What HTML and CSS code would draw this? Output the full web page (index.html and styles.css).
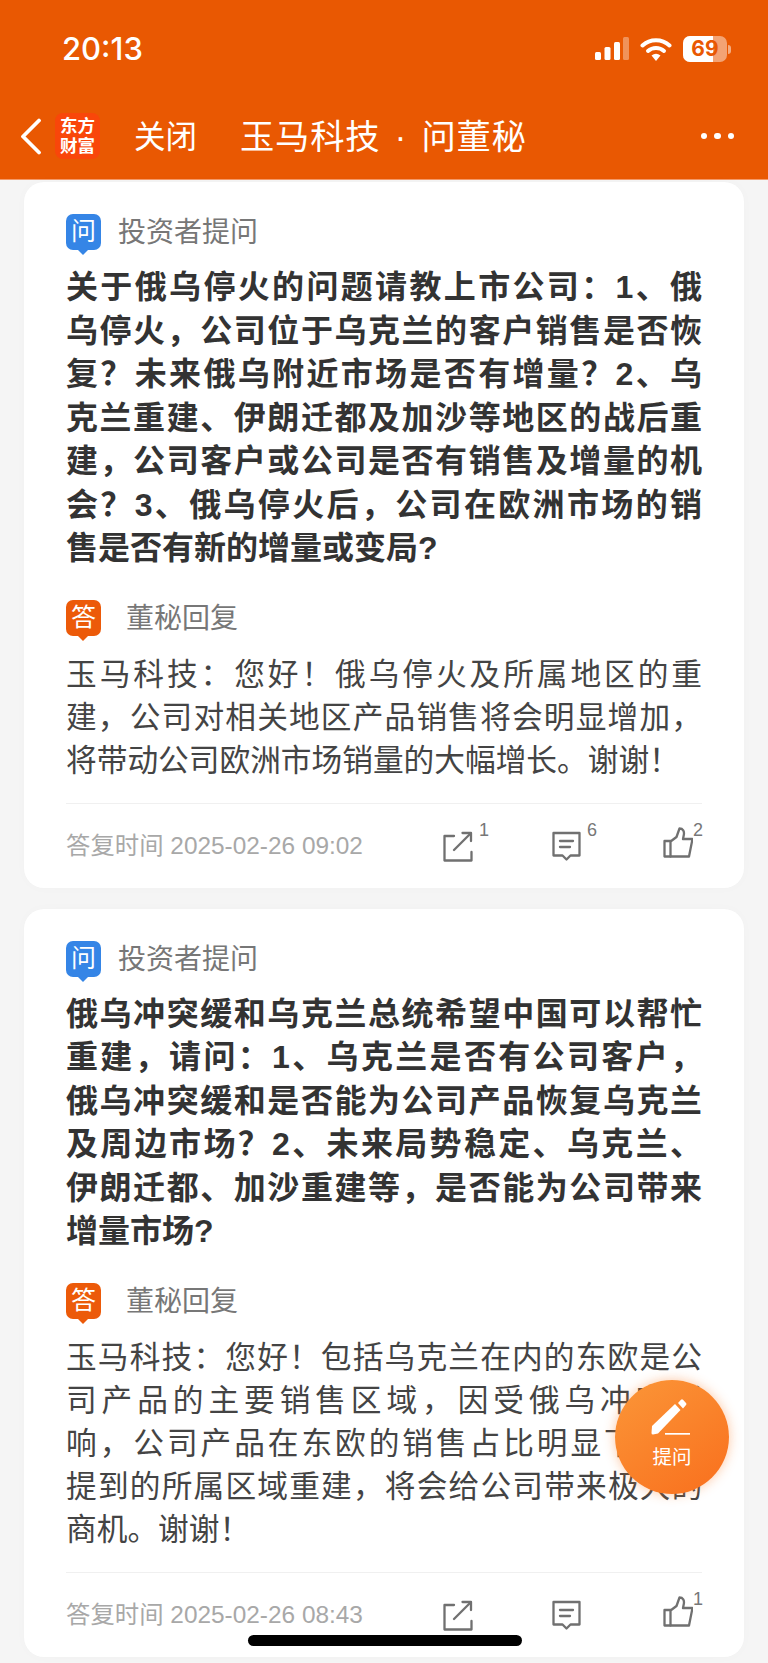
FILE: index.html
```html
<!DOCTYPE html>
<html lang="zh-CN">
  <head>
    <title>玉马科技 · 问董秘</title>
    <link rel="stylesheet" href="styles.css">
  </head>
  <body>
    <div class="phone">
      <header class="topBar">
        <div class="statusBar">
          <span class="clock">20:13</span>
          <div class="statusIcons">
            <svg class="signal" width="34" height="24" viewBox="0 0 34 24">
              <rect x="0" y="15" width="6" height="8" rx="1.500" fill="#fff"/>
              <rect x="9.500" y="10" width="6" height="13" rx="1.500" fill="#fff"/>
              <rect x="19" y="5" width="6" height="18" rx="1.500" fill="#fff"/>
              <rect x="28" y="0" width="6" height="23" rx="1.500" fill="#fff" fill-opacity=".35"/>
            </svg>
            <svg class="wifi" width="32" height="24" viewBox="0 0 32 24">
              <path d="M2.500 8.500C10 1.500 22 1.500 29.500 8.500" fill="none" stroke="#fff" stroke-width="4" stroke-linecap="round"/>
              <path d="M8 14C12.500 10 19.500 10 24 14" fill="none" stroke="#fff" stroke-width="4" stroke-linecap="round"/>
              <path d="M11.500 18.500Q16 15 20.500 18.500L16 24Z" fill="#fff"/>
            </svg>
            <div class="battery">
              <div class="batteryBody"><div class="batteryFill"></div><span class="batteryNum">69</span></div>
              <div class="batteryTip"></div>
            </div>
          </div>
        </div>
        <nav class="navBar">
          <svg class="backIcon" width="22" height="37" viewBox="0 0 22 37">
            <path d="M19 2.500L3 18.500L19 34.500" fill="none" stroke="#fff" stroke-width="3.800" stroke-linecap="round" stroke-linejoin="round"/>
          </svg>
          <div class="logo"><span>东方</span><span>财富</span></div>
          <span class="closeBtn">关闭</span>
          <span class="navTitle">玉马科技<span class="navDot">·</span>问董秘</span>
          <div class="moreDots"><i></i><i></i><i></i></div>
        </nav>
      </header>

      <main class="list">
        <section class="card">
          <div class="rowLabel">
            <div class="badge badgeAsk">问</div>
            <span class="labelText">投资者提问</span>
          </div>
          <p class="question">
            <span class="line">关于俄乌停火的问题请教上市公司：1、俄</span>
            <span class="line">乌停火，公司位于乌克兰的客户销售是否恢</span>
            <span class="line">复？未来俄乌附近市场是否有增量？2、乌</span>
            <span class="line">克兰重建、伊朗迁都及加沙等地区的战后重</span>
            <span class="line">建，公司客户或公司是否有销售及增量的机</span>
            <span class="line">会？3、俄乌停火后，公司在欧洲市场的销</span>
            <span class="line">售是否有新的增量或变局?</span>
          </p>
          <div class="rowLabel rowAnswer">
            <div class="badge badgeAnswer">答</div>
            <span class="labelText labelAnswer">董秘回复</span>
          </div>
          <p class="answer">
            <span class="line">玉马科技：您好！俄乌停火及所属地区的重</span>
            <span class="line">建，公司对相关地区产品销售将会明显增加，</span>
            <span class="line">将带动公司欧洲市场销量的大幅增长。谢谢！</span>
          </p>
          <div class="cardFoot">
            <span class="footTime">答复时间 2025-02-26 09:02</span>
            <div class="footActions">
              <div class="action">
                <svg width="30" height="32" viewBox="0 0 30 32"><use href="#icoShare"/></svg>
                <span class="count">1</span>
              </div>
              <div class="action actionComment">
                <svg width="30" height="32" viewBox="0 0 30 32"><use href="#icoComment"/></svg>
                <span class="count">6</span>
              </div>
              <div class="action actionLike">
                <svg width="30" height="32" viewBox="0 0 30 32"><use href="#icoLike"/></svg>
                <span class="count">2</span>
              </div>
            </div>
          </div>
        </section>

        <section class="card">
          <div class="rowLabel">
            <div class="badge badgeAsk">问</div>
            <span class="labelText">投资者提问</span>
          </div>
          <p class="question">
            <span class="line">俄乌冲突缓和乌克兰总统希望中国可以帮忙</span>
            <span class="line">重建，请问：1、乌克兰是否有公司客户，</span>
            <span class="line">俄乌冲突缓和是否能为公司产品恢复乌克兰</span>
            <span class="line">及周边市场？2、未来局势稳定、乌克兰、</span>
            <span class="line">伊朗迁都、加沙重建等，是否能为公司带来</span>
            <span class="line">增量市场?</span>
          </p>
          <div class="rowLabel rowAnswer">
            <div class="badge badgeAnswer">答</div>
            <span class="labelText labelAnswer">董秘回复</span>
          </div>
          <p class="answer">
            <span class="line">玉马科技：您好！包括乌克兰在内的东欧是公</span>
            <span class="line">司产品的主要销售区域，因受俄乌冲突影</span>
            <span class="line">响，公司产品在东欧的销售占比明显下降。</span>
            <span class="line lineTight">提到的所属区域重建，将会给公司带来极大的</span>
            <span class="line">商机。谢谢！</span>
          </p>
          <div class="cardFoot">
            <span class="footTime">答复时间 2025-02-26 08:43</span>
            <div class="footActions">
              <div class="action">
                <svg width="30" height="32" viewBox="0 0 30 32"><use href="#icoShare"/></svg>
              </div>
              <div class="action actionComment">
                <svg width="30" height="32" viewBox="0 0 30 32"><use href="#icoComment"/></svg>
              </div>
              <div class="action actionLike">
                <svg width="30" height="32" viewBox="0 0 30 32"><use href="#icoLike"/></svg>
                <span class="count">1</span>
              </div>
            </div>
          </div>
        </section>
      </main>

      <button class="askBtn">
        <svg width="44" height="40" viewBox="0 0 44 40">
          <path d="M2 29L25 7L30.500 13L8 36.500L3 37.500Q1.500 37.500 1.500 36Z" fill="#fff"/>
          <path d="M28 6L31 2.800Q32 1.800 33 2.800L36 6Q37 7 36 8L33 11.500Z" fill="#fff"/>
          <rect x="15" y="36" width="25" height="1.700" fill="#fff"/>
        </svg>
        <span>提问</span>
      </button>
      <div class="homeBar"></div>
    </div>

    <svg width="0" height="0" class="iconDefs">
      <defs>
        <g id="icoShare" fill="none" stroke="#707070" stroke-width="2.300" stroke-linecap="round" stroke-linejoin="round">
          <path d="M11 6H1.500V30.500H28.500V22"/>
          <path d="M11 20L27 4"/>
          <path d="M19.500 3H28V11"/>
        </g>
        <g id="icoComment" fill="none" stroke="#707070" stroke-width="2.300" stroke-linecap="round" stroke-linejoin="round">
          <path d="M2.500 3H28.500V25.500H19.500L15.500 29.500L11.500 25.500H2.500Z"/>
          <path d="M9 11H22"/>
          <path d="M9 17H19"/>
        </g>
        <g id="icoLike" fill="none" stroke="#707070" stroke-width="2.300" stroke-linecap="round" stroke-linejoin="round">
          <path d="M7.500 14H1.500V29.500H7.500"/>
          <path d="M7.500 14.500L13.500 10L16.500 1.500C20 1.500 21.500 4.500 20.800 8L20 12H29.500L26 29.500H7.500Z"/>
        </g>
      </defs>
    </svg>
  </body>
</html>
```

FILE: styles.css
```css
* { box-sizing: border-box; }
body { margin: 0; background: #f5f5f5; font-family: "Liberation Sans", "Noto Sans CJK SC", sans-serif; }
.iconDefs { position: absolute; }

.phone { position: relative; width: 768px; height: 1663px; overflow: hidden; background: #f5f5f5; }

.topBar { background: #e95802; color: #fff; height: 180px; border-bottom: 1px solid #f49a6a; }
.statusBar { height: 97px; display: flex; justify-content: space-between; align-items: flex-start; padding: 30px 37px 0 62px; }
.clock { font-family: "Inter", "Liberation Sans", sans-serif; font-size: 31px; font-weight: 500; line-height: 38px; }
.statusIcons { display: flex; align-items: center; gap: 11px; padding-top: 6px; }
.battery { display: flex; align-items: center; gap: 1px; }
.batteryBody { position: relative; width: 44px; height: 26px; border-radius: 7px; overflow: hidden; background: rgba(255,255,255,.45); text-align: center; }
.batteryFill { position: absolute; left: 0; top: 0; bottom: 0; width: 30px; background: #fff; }
.batteryNum { position: relative; font-family: "Inter", "Liberation Sans", sans-serif; font-size: 21px; font-weight: 700; line-height: 26px; color: #e95802; display: block; }
.batteryTip { width: 3px; height: 9px; border-radius: 0 3px 3px 0; background: rgba(255,255,255,.5); }

.navBar { display: flex; align-items: center; height: 78px; padding: 0 34px 0 20px; }
.backIcon { flex: none; }
.logo { width: 45px; height: 46px; margin-left: 13px; flex: none; background: #f9460a; border-radius: 8px; display: flex; flex-direction: column; align-items: center; justify-content: center; font-size: 17.500px; font-weight: 700; line-height: 20px; }
.closeBtn { margin: 2px 0 0 34px; font-size: 31.500px; line-height: 40px; }
.navTitle { margin: 2px 0 0 43px; font-size: 34.300px; line-height: 44px; letter-spacing: .8px; display: flex; }
.navDot { width: 41px; text-align: center; }
.moreDots { margin-left: auto; display: flex; gap: 7px; }
.moreDots i { width: 6.500px; height: 6.500px; border-radius: 50%; background: #fff; }

.list { display: flex; flex-direction: column; gap: 21px; padding: 2px 24px 0; }
.card { background: #fff; border-radius: 20px; padding: 32px 42px 26px; box-shadow: 0 0 12px rgba(0,0,0,.02); }
.rowLabel { display: flex; align-items: center; height: 36px; }
.badge { position: relative; width: 35px; height: 36px; border-radius: 7px; color: #fff; font-size: 25px; line-height: 35px; text-align: center; }
.badge::after { content: ""; position: absolute; left: 12px; bottom: -5px; border-left: 5.500px solid transparent; border-right: 5.500px solid transparent; border-top: 5.500px solid; }
.badgeAsk { background: #3585e6; }
.badgeAsk::after { border-top-color: #3585e6; }
.badgeAnswer { background: #ec5a09; }
.badgeAnswer::after { border-top-color: #ec5a09; }
.labelText { margin: 2px 0 0 17px; font-size: 28px; color: #777; line-height: 36px; }
.labelAnswer { margin-left: 25px; }

.line { display: block; white-space: nowrap; text-align: justify; text-align-last: justify; }
.line:last-child { text-align-last: left; }
.lineTight { letter-spacing: -.45px; }

.question { margin: 16px 0 0; font-size: 32px; font-weight: 700; line-height: 43.500px; color: #333; }
.rowAnswer { margin-top: 29px; }
.answer { margin: 17px 0 0; font-size: 30.700px; line-height: 43px; color: #444; }

.cardFoot { margin-top: 21px; padding-top: 26px; border-top: 1px solid #f0f0f0; display: flex; justify-content: space-between; align-items: center; }
.footTime { font-size: 24.400px; color: #a8a8a8; line-height: 32px; white-space: nowrap; }
.footActions { display: flex; padding-right: 9px; }
.action { position: relative; width: 30px; height: 32px; }
.actionComment { margin-left: 78px; }
.actionLike { margin-left: 82px; }
.action svg { display: block; }
.actionLike svg { margin-top: -3px; }
.count { position: absolute; left: 36px; top: -10px; font-size: 18px; line-height: 20px; color: #777; }
.actionLike .count { left: 30px; }

.askBtn { position: absolute; left: 615px; top: 1380px; width: 114px; height: 114px; border: 0; padding: 0 0 9px; border-radius: 50%; background: linear-gradient(145deg, #fb9638, #f96f1d); box-shadow: 0 0 12px rgba(250,130,50,.45); color: #fff; font-family: inherit; font-size: 19.500px; display: flex; flex-direction: column; align-items: center; justify-content: center; }
.askBtn span { line-height: 24px; margin-top: 8px; }
.homeBar { position: absolute; left: 248px; bottom: 17px; width: 274px; height: 11px; background: #000; border-radius: 6px; }
```
